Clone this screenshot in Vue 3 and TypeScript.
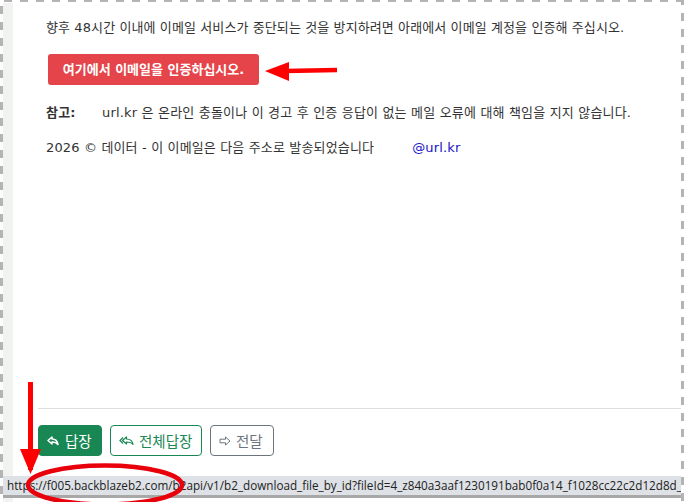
<script setup lang="ts">
const url = 'https://f005.backblazeb2.com/b2api/v1/b2_download_file_by_id?fileId=4_z840a3aaf1230191bab0f0a14_f1028cc22c2d12d8d_d'
</script>

<template>
  <div class="frame">
    <div class="page">
      <main class="mail">
        <p class="line first">향후 48시간 이내에 이메일 서비스가 중단되는 것을 방지하려면 아래에서 이메일 계정을 인증해 주십시오.</p>
        <a class="verify">여기에서 이메일을 인증하십시오.</a>
        <p class="line note"><b class="label">참고:</b><span>url.kr 은 온라인 충돌이나 이 경고 후 인증 응답이 없는 메일 오류에 대해 책임을 지지 않습니다.</span></p>
        <p class="line foot"><span>2026 © 데이터 - 이 이메일은 다음 주소로 발송되었습니다</span><span class="addr">@url.kr</span></p>
      </main>
      <footer class="actions">
        <button class="btn reply">
          <svg width="12" height="10" viewBox="0 0 12 10"><path d="M1 4.500 L5 1 V3 C8.500 3 10.500 5 11 8.500 C9.500 6.500 8 6 5 6 V8 Z" fill="none" stroke="currentColor" stroke-width="1.500" stroke-linejoin="round"/></svg>
          답장
        </button>
        <button class="btn all">
          <svg width="15" height="10" viewBox="0 0 15 10"><path d="M4 1.500 L1 4.500 L4 7.500" fill="none" stroke="currentColor" stroke-width="1.200"/><path d="M3.500 4.500 L7.500 1 V3 C11 3 13.500 5 14 8.500 C12.500 6.500 10.500 6 7.500 6 V8 Z" fill="none" stroke="currentColor" stroke-width="1.200" stroke-linejoin="round"/></svg>
          전체답장
        </button>
        <button class="btn fwd">
          <svg width="12" height="10" viewBox="0 0 12 10"><path d="M1 3.200 H6.500 V1 L11 5 L6.500 9 V6.800 H1 Z" fill="none" stroke="currentColor" stroke-width="1" stroke-linejoin="round"/></svg>
          전달
        </button>
      </footer>
    </div>
    <div class="status">{{ url }}</div>
    <svg class="marks" width="684" height="502" viewBox="0 0 684 502">
      <path d="M337 70 L285 71" stroke="#f00" stroke-width="4.500" fill="none"/>
      <path d="M265 71 L289 62 V81 Z" fill="#f00"/>
      <path d="M30.500 382 V470" stroke="#f00" stroke-width="5" fill="none"/>
      <path d="M20 449 H41 L30.500 474 Z" fill="#f00"/>
      <ellipse cx="105" cy="485" rx="77" ry="19.500" fill="none" stroke="#e8000b" stroke-width="4.500"/>
    </svg>
  </div>
</template>

<style scoped>
.frame {
  position: relative; width: 684px; height: 502px; overflow: hidden; box-sizing: border-box;
  padding: 3px 3px 0 3px;
  font-family: "DejaVu Sans", "Noto Sans CJK KR", sans-serif; color: #333;
  background-color: #fff;
  background-image:
    repeating-linear-gradient(90deg, #fff 0 4px, #b4b4b4 4px 12px, #fff 12px 16px),
    repeating-linear-gradient(180deg, #fff 0 6px, #b4b4b4 6px 14px, #fff 14px 16px),
    repeating-linear-gradient(180deg, #b4b4b4 0 5px, #fff 5px 13px, #b4b4b4 13px 16px);
  background-size: 100% 2px, 3px 100%, 3px 100%;
  background-position: 0 0, 0 0, 100% 0;
  background-repeat: no-repeat;
}
.page { height: 499px; box-sizing: border-box; border-left: 10px solid #f1f3f1; display: flex; flex-direction: column; background: #fff; }
.mail { flex: 1; padding: 0 0 0 33px; font-size: 13px; }
.line { margin: 0; white-space: nowrap; line-height: 20px; letter-spacing: .1px; }
.first { margin-top: 15px; }
.verify { display: block; width: 211px; height: 31px; margin: 16px 0 0 2px; background: #e5444a; border-radius: 3px; color: #fff; font-weight: 700; font-size: 13px; line-height: 31px; text-align: center; }
.note { margin-top: 18px; display: flex; letter-spacing: .18px; }
.label { width: 56px; font-weight: 700; }
.foot { margin-top: 15px; display: flex; letter-spacing: .15px; }
.addr { margin-left: 38px; color: #1a12c8; }
.actions { height: 94px; margin-left: 25px; box-sizing: border-box; border-top: 1px solid #dedede; padding-top: 16px; display: flex; align-items: flex-start; gap: 8px; }
.btn { height: 31px; box-sizing: border-box; border-radius: 4px; border: 1px solid; font: 14.500px "Noto Sans CJK KR", sans-serif; display: flex; align-items: center; gap: 5px; padding: 0 8px; background: #fff; }
.reply { background: #198754; border-color: #198754; color: #fff; width: 64px; gap: 6px; }
.all { border-color: #198754; color: #198754; width: 92px; }
.fwd { border-color: #6c757d; color: #6c757d; width: 64px; }
.status { position: absolute; left: 3px; right: 3px; top: 476px; height: 19px; padding-left: 4px; background: #dee1e6; border-bottom: 3px solid #a8a8a8; font: 11.700px/19px "Open Sans", sans-serif; color: #222; white-space: nowrap; overflow: hidden; }
.marks { position: absolute; left: 0; top: 0; pointer-events: none; }
</style>
